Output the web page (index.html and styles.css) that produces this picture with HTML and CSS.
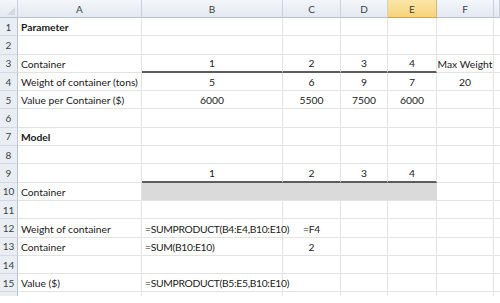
FILE: index.html
```html
<!DOCTYPE html>
<html>
<head>
<meta charset="utf-8">
<link rel="stylesheet" href="styles.css">
</head>
<body>
<div class="sheet">
  <div class="hd corner"><span class="tri"></span></div>
  <div class="hd">A</div><div class="hd">B</div><div class="hd">C</div><div class="hd">D</div><div class="hd sel">E</div><div class="hd">F</div><div class="hd"></div>

  <div class="rn">1</div><div class="c b">Parameter</div><div class="c"></div><div class="c"></div><div class="c"></div><div class="c"></div><div class="c"></div><div class="c"></div>
  <div class="rn">2</div><div class="c"></div><div class="c"></div><div class="c"></div><div class="c"></div><div class="c"></div><div class="c"></div><div class="c"></div>
  <div class="rn">3</div><div class="c">Container</div><div class="c ctr tb">1</div><div class="c ctr tb">2</div><div class="c ctr tb">3</div><div class="c ctr tb">4</div><div class="c ctr">Max Weight</div><div class="c"></div>
  <div class="rn">4</div><div class="c">Weight of container (tons)</div><div class="c ctr">5</div><div class="c ctr">6</div><div class="c ctr">9</div><div class="c ctr">7</div><div class="c ctr">20</div><div class="c"></div>
  <div class="rn">5</div><div class="c">Value per Container ($)</div><div class="c ctr">6000</div><div class="c ctr">5500</div><div class="c ctr">7500</div><div class="c ctr">6000</div><div class="c"></div><div class="c"></div>
  <div class="rn">6</div><div class="c"></div><div class="c"></div><div class="c"></div><div class="c"></div><div class="c"></div><div class="c"></div><div class="c"></div>
  <div class="rn">7</div><div class="c b">Model</div><div class="c"></div><div class="c"></div><div class="c"></div><div class="c"></div><div class="c"></div><div class="c"></div>
  <div class="rn">8</div><div class="c"></div><div class="c"></div><div class="c"></div><div class="c"></div><div class="c"></div><div class="c"></div><div class="c"></div>
  <div class="rn">9</div><div class="c"></div><div class="c ctr tb">1</div><div class="c ctr tb">2</div><div class="c ctr tb">3</div><div class="c ctr tb">4</div><div class="c"></div><div class="c"></div>
  <div class="rn">10</div><div class="c">Container</div><div class="c fill"></div><div class="c fill"></div><div class="c fill"></div><div class="c fill"></div><div class="c"></div><div class="c"></div>
  <div class="rn">11</div><div class="c"></div><div class="c"></div><div class="c"></div><div class="c"></div><div class="c"></div><div class="c"></div><div class="c"></div>
  <div class="rn">12</div><div class="c">Weight of container</div><div class="c fx">=SUMPRODUCT(B4:E4,B10:E10)</div><div class="c ctr fx">=F4</div><div class="c"></div><div class="c"></div><div class="c"></div><div class="c"></div>
  <div class="rn">13</div><div class="c">Container</div><div class="c fx">=SUM(B10:E10)</div><div class="c ctr">2</div><div class="c"></div><div class="c"></div><div class="c"></div><div class="c"></div>
  <div class="rn">14</div><div class="c"></div><div class="c"></div><div class="c"></div><div class="c"></div><div class="c"></div><div class="c"></div><div class="c"></div>
  <div class="rn">15</div><div class="c">Value ($)</div><div class="c fx">=SUMPRODUCT(B5:E5,B10:E10)</div><div class="c"></div><div class="c"></div><div class="c"></div><div class="c"></div><div class="c"></div>
  <div class="rn last"></div><div class="c last"></div><div class="c last"></div><div class="c last"></div><div class="c last"></div><div class="c last"></div><div class="c last"></div><div class="c last"></div>
</div>
</body>
</html>
```
FILE: styles.css
```css
html, body {
  margin: 0;
  padding: 0;
  background: #ffffff;
}
.sheet {
  display: grid;
  grid-template-columns: 18px 124px 141px 58px 47px 49px 57px 6px;
  grid-template-rows: 18px repeat(15, 18.3px) 4px;
  width: 500px;
  font-family: Lato, "Liberation Sans", sans-serif;
  font-size: 10.3px;
  color: #1a1a1a;
}
.hd {
  box-sizing: border-box;
  background: linear-gradient(#f3f6fa, #e3e9f2);
  border-right: 1px solid #c9d1dc;
  border-bottom: 1px solid #b9c3d0;
  display: flex;
  align-items: center;
  justify-content: center;
  color: #3f3f3f;
  font-size: 10px;
}
.hd.sel {
  background: linear-gradient(#fbe6a8, #f6d37a);
  border-right-color: #e2b55a;
  border-bottom-color: #d9a441;
}
.corner {
  position: relative;
}
.tri {
  position: absolute;
  right: 2px;
  bottom: 2px;
  width: 0;
  height: 0;
  border-left: 8px solid transparent;
  border-bottom: 8px solid #d3d9e2;
}
.rn {
  box-sizing: border-box;
  background: #e9eef5;
  border-right: 1px solid #bcc6d3;
  border-bottom: 1px solid #d3dae4;
  display: flex;
  align-items: center;
  justify-content: center;
  color: #3f3f3f;
  font-size: 10px;
}
.c {
  box-sizing: border-box;
  border-right: 1px solid #e3e3e3;
  border-bottom: 1px solid #e3e3e3;
  display: flex;
  align-items: flex-end;
  padding: 0 3px 2px;
  white-space: nowrap;
  overflow: visible;
}
.ctr {
  justify-content: center;
}
.b {
  font-weight: bold;
}
.fx {
  letter-spacing: -0.3px;
}
.tb {
  border-bottom: 2px solid #5c5c5c;
}
.fill {
  background-color: #dadada;
  background-image: radial-gradient(#c9c9c9 0.5px, transparent 0.6px);
  background-size: 2px 2px;
  border-right-color: #dadada;
}
.last {
  border-bottom: none;
}
```
